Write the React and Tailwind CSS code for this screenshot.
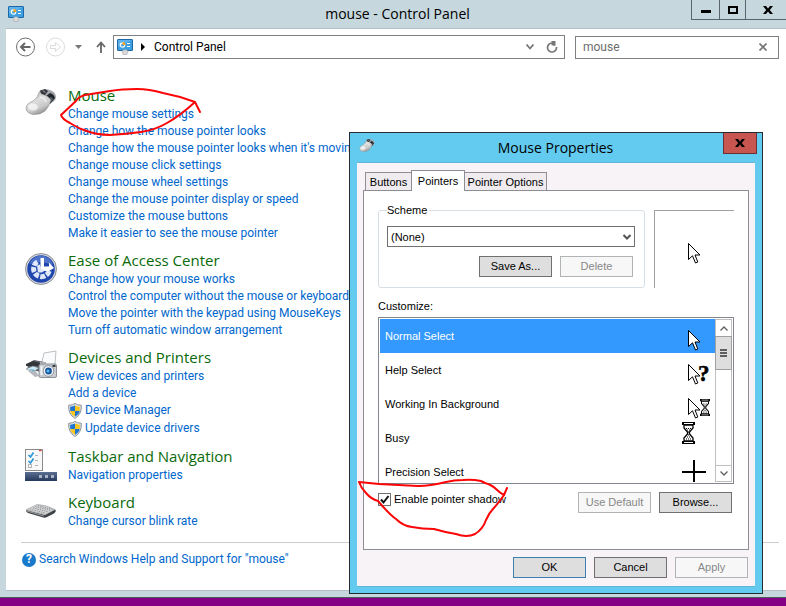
import React, { useState } from "react"

const groups = [
  {
    title: "Mouse",
    icon: "mouse",
    links: [
      { text: "Change mouse settings" },
      { text: "Change how the mouse pointer looks" },
      { text: "Change how the mouse pointer looks when it's moving" },
      { text: "Change mouse click settings" },
      { text: "Change mouse wheel settings" },
      { text: "Change the mouse pointer display or speed" },
      { text: "Customize the mouse buttons" },
      { text: "Make it easier to see the mouse pointer" },
    ],
  },
  {
    title: "Ease of Access Center",
    icon: "ease",
    links: [
      { text: "Change how your mouse works" },
      { text: "Control the computer without the mouse or keyboard" },
      { text: "Move the pointer with the keypad using MouseKeys" },
      { text: "Turn off automatic window arrangement" },
    ],
  },
  {
    title: "Devices and Printers",
    icon: "devices",
    links: [
      { text: "View devices and printers" },
      { text: "Add a device" },
      { text: "Device Manager", shield: true },
      { text: "Update device drivers", shield: true },
    ],
  },
  {
    title: "Taskbar and Navigation",
    icon: "taskbar",
    links: [{ text: "Navigation properties" }],
  },
  {
    title: "Keyboard",
    icon: "keyboard",
    links: [{ text: "Change cursor blink rate" }],
  },
]

const pointers = ["Normal Select", "Help Select", "Working In Background", "Busy", "Precision Select"]

/* ICONS */

const MouseIcon = ({ className }) => (
  <svg viewBox="0 0 32 30" className={className} aria-hidden="true">
    <defs>
      <linearGradient id="mouseBody" x1="0.2" y1="0" x2="0.7" y2="1">
        <stop offset="0" stopColor="#a8a8a8" />
        <stop offset="0.4" stopColor="#dedede" />
        <stop offset="0.7" stopColor="#cacaca" />
        <stop offset="1" stopColor="#848484" />
      </linearGradient>
    </defs>
    <path d="M15 4 Q19 0 25 2 Q31 4 31 9 Q31 12 28 14 L22 17z" fill="#a4a7ab" />
    <path d="M21 8 L25 5 Q29 6 30 10 L25 16 Q25 11 21 8z" fill="#23272e" />
    <path d="M25 9 Q27 9 28 11 L26 14z" fill="#59616c" />
    <path d="M14 4.500 Q15 2 17 3 L17 6 Q24 8 26 12 Q24 19 20 23 Q15 27 8 26.500 Q1 25 1 20 Q2 15 8 13 Q13 10 14 4.500z" fill="url(#mouseBody)" stroke="#8a8a8a" strokeWidth="0.600" />
    <path d="M15 2.500 L20 1 L23 3 L20 7 L16 5.500z" fill="#33363c" />
    <path d="M18 2.500 L20 4.500" stroke="#d5d5d5" />
    <ellipse cx="8" cy="19" rx="5" ry="3.500" fill="#fff" opacity="0.650" />
    <path d="M15 9 Q20 10 21 14" stroke="#f5f5f5" strokeWidth="1.500" fill="none" opacity="0.800" />
  </svg>
)

const EaseIcon = () => (
  <svg viewBox="0 0 32 32" className="h-8 w-8" aria-hidden="true">
    <circle cx="16" cy="16" r="15.500" fill="#d5d8dc" stroke="#777b82" strokeWidth="0.800" />
    <circle cx="16" cy="16" r="13.800" fill="#1f46ad" />
    <path d="M4 11 Q8 3 16 2.500 Q25 3 28 12 Q16 7 4 11z" fill="#6285d6" opacity="0.700" />
    <path
      d="M24.200 18 A8 8 0 1 1 13 8.500"
      fill="none"
      stroke="#dfe8fa"
      strokeWidth="5"
      strokeDasharray="5 1.400"
    />
    <path d="M15.500 5 h3.500 v8.500 h5 v-4 l5 5.500 l-5 3 h-8.500z" fill="#fff" />
    <path d="M12 12.500 l3 -1 l1 4 l4 2 l-3 2 h-4z" fill="#dfe8fa" />
  </svg>
)

const DevicesIcon = () => (
  <svg viewBox="0 0 32 32" className="h-8 w-8" aria-hidden="true">
    <path d="M19 3 L31 1 L30 14 L16 16z" fill="#fafbfc" stroke="#a0a5ab" strokeWidth="0.7" />
    <path d="M2 14 L9 10 L19 12 L16 22 L3 19z" fill="#5c6168" />
    <path d="M1 14 L8 11 L18 14 L14 16 L1 16z" fill="#33373c" />
    <path d="M1 19 L8 16 L14 18 L8 22z" fill="#cfeaf7" stroke="#6a7076" strokeWidth="0.5" />
    <path d="M3 21 L10 20 L14 26 L10 27z" fill="#b5b9be" />
    <path d="M4 19 l6 1 l-2 1z" fill="#3a9fd0" />
    <rect x="14" y="14" width="17.500" height="13.500" rx="1.500" fill="#c9cdd2" stroke="#777c83" strokeWidth="0.8" />
    <rect x="15" y="12" width="6" height="3" fill="#a7abb0" />
    <rect x="15.500" y="16" width="2" height="9" fill="#f2f3f5" />
    <rect x="27.500" y="15" width="3" height="2" fill="#3b4046" />
    <circle cx="23.500" cy="21" r="5.300" fill="#f3f5f7" stroke="#70757c" strokeWidth="0.7" />
    <circle cx="23.500" cy="21" r="3.400" fill="#14539c" />
    <circle cx="23" cy="21" r="1.500" fill="#58c0f0" />
  </svg>
)

const TaskbarIcon = () => (
  <svg viewBox="0 0 32 32" className="h-8 w-8" aria-hidden="true">
    <defs>
      <linearGradient id="bar" x1="0" y1="0" x2="0" y2="1">
        <stop offset="0" stopColor="#5b6f92" />
        <stop offset="1" stopColor="#26395c" />
      </linearGradient>
    </defs>
    <rect x="0.500" y="0.500" width="17" height="21" fill="#f8f8f8" stroke="#8b8b8b" />
    <rect x="14" y="1" width="2.500" height="1.200" fill="#d83b2b" />
    <path d="M3.500 6 l2 2 l3 -4.500 M3.500 12 l2 2 l3 -4.500" stroke="#2b95d8" strokeWidth="1.700" fill="none" />
    <rect x="3.500" y="15.500" width="3" height="3" fill="none" stroke="#b4b4b4" />
    <path d="M10 6.500 h3 M10 11.500 h3 M10 16.500 h3" stroke="#b4b4b4" />
    <rect x="0" y="23" width="32" height="9" fill="url(#bar)" />
    <path d="M14 26 h3 v3 h-3z M20 26 h3 v3 h-3z M26 26 h3 v3 h-3z" fill="#a9b4c6" />
  </svg>
)

const KeyboardIcon = () => (
  <svg viewBox="0 0 32 32" className="h-8 w-8" aria-hidden="true">
    <path d="M1 15 L20 20 L30 14.500 Q32 16 29 18.500 L21 22.500 Q18 23 15 21.500 L3 18 Q1 17 1 15z" fill="#3f4246" />
    <path d="M1.500 14.500 L12 9.500 Q20 9.500 30 14.500 L20 19.500 Q10 17.500 1.500 14.500z" fill="#d4d5d7" stroke="#8a8a8a" strokeWidth="0.500" />
    <path d="M5 14 L20 18 M8 12.800 L23 16.800 M10.500 11.600 L26 15.500 M13 10.600 L28 14.500" stroke="#85888c" strokeWidth="0.900" strokeDasharray="1.300 1" />
    <path d="M2 16 L19 21" stroke="#a5a7aa" strokeWidth="0.900" />
  </svg>
)

const icons = {
  mouse: <MouseIcon className="h-[30px] w-8" />,
  ease: <EaseIcon />,
  devices: <DevicesIcon />,
  taskbar: <TaskbarIcon />,
  keyboard: <KeyboardIcon />,
}

const ShieldIcon = () => (
  <svg viewBox="0 0 14 16" className="h-4 w-[14px] shrink-0" aria-hidden="true">
    <path d="M7 0.500 Q9 2 13.300 2.300 Q14 11 7 15.500 Q0 11 0.700 2.300 Q5 2 7 0.500z" fill="#e1e4e6" stroke="#7e868c" strokeWidth="0.900" />
    <path d="M7 2.500 V8 H2.300 Q2 6 2.200 3.700 Q5 3.500 7 2.500z M7 8 H11.700 Q11 11.500 7 13.800z" fill="#1f76d0" />
    <path d="M7 2.500 V8 H11.700 Q12 6 11.800 3.700 Q9 3.500 7 2.500z M7 8 H2.300 Q3 11.500 7 13.800z" fill="#fac61e" />
  </svg>
)

const PanelIcon = () => (
  <svg viewBox="0 0 16 16" className="h-4 w-4 shrink-0" aria-hidden="true">
    <rect x="0.500" y="0.500" width="15" height="11" rx="0.500" fill="#3d9fe0" stroke="#1c68a8" />
    <path d="M1 1 h14 l-14 7z" fill="#7fc6f2" opacity="0.500" />
    <circle cx="5.500" cy="6" r="2.200" fill="none" stroke="#fff" strokeWidth="1.200" />
    <path d="M5.500 6 V3 A3 3 0 0 1 8.500 6z" fill="#f6a51c" />
    <path d="M10 4.500 h3 M10 7.500 h3" stroke="#fff" />
    <path d="M5 12 Q8 9.500 11 12 L10 15.500 H6z" fill="#d9d9d9" stroke="#a3a3a3" strokeWidth="0.500" />
  </svg>
)

const arrow = "M0.500 0.500 V16.500 L4.500 12.800 L7.500 20 L9.800 19 L7 12 H12z"

const Hourglass = ({ x, y, w, h }) => (
  <svg x={x} y={y} width={w} height={h} viewBox="0 0 13 22" preserveAspectRatio="none">
    <path d="M0 0 h13 v3 h-13z M0 19 h13 v3 h-13z" fill="#000" />
    <path d="M2 1.500 h9 M2 20.500 h9" stroke="#fff" />
    <path d="M2 3 V6 L5.500 10 V12 L2 16 V19 H11 V16 L7.500 12 V10 L11 6 V3z" fill="#fff" stroke="#000" strokeWidth="1.300" />
    <path d="M4 6.500 h1 M6 6.500 h1 M8 6.500 h1 M5 8 h1 M7 8 h1 M6 10 h1 M6 13 h1 M5 15 h1 M7 15 h1 M4 17 h1 M6 17 h1 M8 17 h1" stroke="#000" />
  </svg>
)

const PointerPreview = ({ index }) => (
  <svg viewBox="0 0 32 34" className="h-[34px] w-8 shrink-0" aria-hidden="true">
    {index < 3 && (
      <path d={arrow} transform="translate(6 11)" fill="#fff" stroke="#000" />
    )}
    {index === 1 && (
      <text x="16" y="28" fontFamily="Liberation Serif, serif" fontWeight="bold" fontSize="23" fill="#000" stroke="#000" strokeWidth="0.500">?</text>
    )}
    {index === 2 && <Hourglass x={18} y={12} w={10} h={17} />}
    {index === 3 && <Hourglass x={0} y={1} w={13} h={22} />}
    {index === 4 && <path d="M0 17 h24 M12 5 v24" stroke="#000" strokeWidth="2" />}
  </svg>
)

const CloseCross = () => (
  <svg viewBox="0 0 10 8" className="h-2 w-[10px]" aria-hidden="true">
    <path d="M0 0 H3 L5 2.500 L7 0 H10 L6.800 4 L10 8 H7 L5 5.500 L3 8 H0 L3.200 4z" fill="#000" />
  </svg>
)

/* DIALOG */

const DialogButton = ({ children, disabled, primary }) => (
  <button
    disabled={disabled}
    className={`h-[21px] w-[73px] border text-center leading-[19px]
      ${
        disabled
          ? "border-[#b0b4b5] bg-[#f7f7f7] text-[#888888]"
          : primary
          ? "border-[#3c7fb1] bg-[#dedede]"
          : "border-[#707070] bg-[#dedede]"
      }`}
  >
    {children}
  </button>
)

const MouseProperties = () => {
  const [selected, setSelected] = useState(0)
  const [shadow, setShadow] = useState(true)

  return (
    <section
      aria-label="Mouse Properties"
      className="absolute left-[349px] top-[132px] w-[414px] border border-[#242c30] bg-[#62cbef] pb-[6px]
                 font-['Liberation_Sans',Arial,sans-serif] text-[11px] leading-[14px] text-black"
    >
      {/* TITLE BAR */}
      <header className="flex h-[29px] items-start pl-[9px] pr-[5px]">
        <MouseIcon className="mt-[5px] h-4 w-4" />
        <h2 className="flex-1 pl-[13px] text-center font-['Open_Sans',sans-serif] text-[14px] leading-[30px]">
          Mouse Properties
        </h2>
        <button
          aria-label="Close"
          className="flex h-[21px] w-[34px] items-center justify-center border border-t-0 border-[#6c3033] bg-[#c75650]"
        >
          <CloseCross />
        </button>
      </header>

      <div className="mx-[7px] border-y border-[#62b4d8] bg-[#f7f3f7] px-[6px] pb-2 pt-[7px]">
        {/* TABS */}
        <div role="tablist" className="flex items-end pl-[2px]">
          <button role="tab" className="h-[18px] w-[46px] border border-b-0 border-r-0 border-[#8c8e94] bg-[#efebef]">
            Buttons
          </button>
          <button
            role="tab"
            aria-selected="true"
            className="relative -mb-px h-[21px] w-[54px] border border-b-0 border-[#8c8e94] bg-white"
          >
            Pointers
          </button>
          <button role="tab" className="h-[18px] w-[82px] border border-b-0 border-l-0 border-[#8c8e94] bg-[#efebef]">
            Pointer Options
          </button>
        </div>

        <div className="border border-[#8c8e94] bg-white px-[14px] pb-[36px] pt-[12px]">
          {/* SCHEME */}
          <div className="flex items-end gap-[9px]">
            <fieldset className="w-[267px] rounded-[3px] border border-[#d5dfe5] px-2 pb-[10px]">
              <legend className="px-0">
                <label htmlFor="scheme" className="pr-[2px]">Scheme</label>
              </legend>
              <div className="relative mr-px mt-[9px]">
                <select
                  id="scheme"
                  className="block h-[21px] w-full appearance-none border border-[#707070] bg-white pl-[3px]"
                >
                  <option>(None)</option>
                </select>
                <svg viewBox="0 0 8 6" className="pointer-events-none absolute right-[4px] top-[8px] h-[6px] w-2" aria-hidden="true">
                  <path d="M0.500 1 L4 4.500 L7.500 1" fill="none" stroke="#555" strokeWidth="2" />
                </svg>
              </div>
              <div className="mt-[9px] flex justify-end gap-2 pr-[3px]">
                <DialogButton>Save As...</DialogButton>
                <DialogButton disabled>Delete</DialogButton>
              </div>
            </fieldset>
            <div className="flex h-[78px] flex-1 items-center justify-center border-l border-t border-[#a0a0a0] pt-2">
              <svg viewBox="0 0 13 21" className="h-[21px] w-[13px]" aria-hidden="true">
                <path d={arrow} fill="#fff" stroke="#000" />
              </svg>
            </div>
          </div>

          {/* CUSTOMIZE LIST */}
          <p id="customize" className="mb-[4px] mt-[11px]">Customize:</p>
          <div className="flex h-[167px] border border-[#828790] p-px">
            <ul role="listbox" aria-labelledby="customize" className="flex-1 overflow-hidden">
              {pointers.map((name, i) => (
                <li
                  key={name}
                  role="option"
                  aria-selected={selected === i}
                  onClick={() => setSelected(i)}
                  className={`flex h-[34px] items-center justify-between pl-[5px] pr-px
                    ${selected === i ? "bg-[#3399ff] text-white" : "text-black"}`}
                >
                  {name}
                  <PointerPreview index={i} />
                </li>
              ))}
            </ul>
            <div className="flex w-[17px] flex-col border border-[#bfbfbf]">
              <button aria-label="Scroll up" className="flex h-4 items-center justify-center">
                <svg viewBox="0 0 8 5" className="h-[5px] w-2" aria-hidden="true">
                  <path d="M0.500 4.500 L4 1 L7.500 4.500" fill="none" stroke="#606060" strokeWidth="1.300" />
                </svg>
              </button>
              <div className="-mx-px flex h-[34px] flex-col items-center justify-center gap-px border border-[#a0a0a0] bg-[#dedede]">
                <span className="h-[2px] w-[7px] bg-[#606060]" />
                <span className="h-[2px] w-[7px] bg-[#606060]" />
                <span className="h-[2px] w-[7px] bg-[#606060]" />
              </div>
              <div className="flex-1" />
              <button aria-label="Scroll down" className="flex h-4 items-center justify-center border-t border-[#bfbfbf]">
                <svg viewBox="0 0 8 5" className="h-[5px] w-2" aria-hidden="true">
                  <path d="M0.500 0.500 L4 4 L7.500 0.500" fill="none" stroke="#606060" strokeWidth="1.300" />
                </svg>
              </button>
            </div>
          </div>

          <div className="mt-[8px] flex items-start gap-2 pr-[2px]">
            <label className="mr-auto flex items-center gap-[3px]">
              <span className="grid h-[13px] w-[13px]">
                <input
                  type="checkbox"
                  checked={shadow}
                  onChange={(e) => setShadow(e.target.checked)}
                  className="col-start-1 row-start-1 h-[13px] w-[13px] appearance-none border border-[#707070] bg-white"
                />
                {shadow && (
                  <svg viewBox="0 0 13 13" className="pointer-events-none col-start-1 row-start-1 h-[13px] w-[13px]" aria-hidden="true">
                    <path d="M3 6.500 L5.500 9.500 L10.500 3" fill="none" stroke="#111" strokeWidth="2" />
                  </svg>
                )}
              </span>
              Enable pointer shadow
            </label>
            <DialogButton disabled>Use Default</DialogButton>
            <DialogButton>Browse...</DialogButton>
          </div>
        </div>

        {/* FOOTER */}
        <div className="mt-[7px] flex justify-end gap-2 pr-px">
          <DialogButton primary>OK</DialogButton>
          <DialogButton>Cancel</DialogButton>
          <DialogButton disabled>Apply</DialogButton>
        </div>
      </div>
    </section>
  )
}

/* red pen marks */
const PenMarks = () => (
  <svg viewBox="0 0 786 606" className="pointer-events-none absolute left-0 top-0 h-[606px] w-[786px]" aria-hidden="true">
    <g fill="none" stroke="#fb0507" strokeWidth="2" strokeLinecap="round" strokeLinejoin="round">
      <path d="M200 112 L195 102 Q179 96 163 93 Q149 89 137 89 Q122 89 110 91 L85 95 Q78 97 76 101 L61 115 Q62 119 70 123 Q78 128 84 130 Q96 135 110 135 Q127 134 141 132 Q155 130 167 123 Q181 115 195 102" />
      <path d="M507 488 L504 495 Q500 493 496 489 Q492 485 485 483 L481 481 Q472 479 463 480 Q454 480 446 482 Q430 486 418 486 Q398 485 379 484 L359 482 Q361 488 366 493 Q371 499 378 501 Q390 515 396 519 Q403 526 412 527 Q422 529 434 529 Q444 532 456 534 Q467 538 475 534 Q483 529 486 520 Q489 513 493 509 Q500 501 504 495" />
    </g>
  </svg>
)

/* CONTROL PANEL */

const App = () => {
  const [query, setQuery] = useState("mouse")

  return (
    <div className="relative flex min-h-screen flex-col overflow-hidden bg-[#c6d7de] font-['Roboto','Segoe_UI',sans-serif] text-[12px] leading-[17px]">
      {/* TITLE BAR */}
      <header className="flex h-[28px] items-start">
        <div className="w-[86px] pl-2 pt-[6px]">
          <PanelIcon />
        </div>
        <h1 className="flex-1 pl-[18px] text-center font-['Open_Sans',sans-serif] text-[14px] leading-[28px] text-black">
          mouse - Control Panel
        </h1>
        <div className="flex h-5 w-[95px] border-b border-l border-[#5a646b]">
          <button aria-label="Minimize" className="flex w-[28px] items-center justify-center border-r border-[#5a646b]">
            <span className="mt-1 h-[3px] w-[10px] bg-black" />
          </button>
          <button aria-label="Maximize" className="flex w-[26px] items-center justify-center border-r border-[#5a646b]">
            <span className="h-2 w-[10px] border-2 border-black" />
          </button>
          <button aria-label="Close" className="flex flex-1 items-center justify-center pl-1">
            <CloseCross />
          </button>
        </div>
      </header>

      <main className="ml-[6px] flex-1 border-y border-[#b4bec8] bg-white">
        {/* NAVIGATION */}
        <nav className="flex items-center pl-[10px] pr-[7px] pt-[6px]">
          <button aria-label="Back">
            <svg viewBox="0 0 20 20" className="h-5 w-5" aria-hidden="true">
              <circle cx="9.500" cy="10" r="9" fill="none" stroke="#6e6e6e" />
              <path d="M14.500 10 H6 M9 6 L5 10 L9 14" fill="none" stroke="#666" strokeWidth="2" />
            </svg>
          </button>
          <button aria-label="Forward" className="ml-[10px]">
            <svg viewBox="0 0 20 20" className="h-5 w-5" aria-hidden="true">
              <circle cx="9.500" cy="10" r="9" fill="none" stroke="#dcdcdc" />
              <path d="M4.500 8.500 H9.500 V5.500 L14.500 10 L9.500 14.500 V11.500 H4.500z" fill="none" stroke="#dcdcdc" />
            </svg>
          </button>
          <button aria-label="Recent locations" className="ml-[9px]">
            <svg viewBox="0 0 8 4" className="h-1 w-2" aria-hidden="true">
              <path d="M0 0 H7 L3.500 4z" fill="#777" />
            </svg>
          </button>
          <button aria-label="Up" className="ml-[13px] mr-[7px]">
            <svg viewBox="0 0 10 12" className="h-3 w-[10px]" aria-hidden="true">
              <path d="M5 12 V2 M1 6 L5 1.500 L9 6" fill="none" stroke="#666" strokeWidth="1.800" />
            </svg>
          </button>
          <div className="flex h-6 flex-1 items-center border border-[#808080] pl-[3px] pr-[6px]">
            <PanelIcon />
            <svg viewBox="0 0 4 8" className="ml-2 mr-[9px] h-2 w-1" aria-hidden="true">
              <path d="M0 0 L4 4 L0 8z" fill="#000" />
            </svg>
            <span className="flex-1 text-black">Control Panel</span>
            <button aria-label="Previous locations">
              <svg viewBox="0 0 8 6" className="h-[6px] w-2" aria-hidden="true">
                <path d="M0.500 0.500 L4 4.500 L7.500 0.500" fill="none" stroke="#777" strokeWidth="1.800" />
              </svg>
            </button>
            <button aria-label="Refresh" className="ml-[12px]">
              <svg viewBox="0 0 12 12" className="h-3 w-3" aria-hidden="true">
                <path d="M10.500 6 A4.500 4.500 0 1 1 6 2" fill="none" stroke="#777" strokeWidth="1.700" />
                <path d="M5.500 0 L9.500 0 L9.500 5 L5.500 4.200z" fill="#777" />
              </svg>
            </button>
          </div>
          <div className="ml-[10px] flex h-[23px] w-[204px] items-center border border-[#808080] pl-[7px] pr-[11px]">
            <input
              aria-label="Search Control Panel"
              value={query}
              onChange={(e) => setQuery(e.target.value)}
              className="min-w-0 flex-1 bg-transparent text-[#6d6d6d] outline-none"
            />
            <button aria-label="Clear search" onClick={() => setQuery("")}>
              <svg viewBox="0 0 8 8" className="h-2 w-2" aria-hidden="true">
                <path d="M0.500 0.500 L7.500 7.500 M7.500 0.500 L0.500 7.500" stroke="#777" strokeWidth="1.700" />
              </svg>
            </button>
          </div>
        </nav>

        {/* RESULTS */}
        <div className="flex flex-col gap-2 pl-[19px] pt-[26px]">
          {groups.map((group) => (
            <section key={group.title} className="flex gap-[11px]">
              <div className="-mb-2 h-8 w-8 shrink-0 pt-[3px]">{icons[group.icon]}</div>
              <div>
                <h2 className="pb-px font-['Open_Sans',sans-serif] text-[15px] leading-[20px] text-[#0a6a0a]">{group.title}</h2>
                <ul>
                  {group.links.map((link) => (
                    <li key={link.text} className={link.shield ? "h-[18px]" : "h-[17px]"}>
                      <a href="#" className="flex items-center gap-[3px] whitespace-nowrap text-[#0066cc]">
                        {link.shield && <ShieldIcon />}
                        {link.text}
                      </a>
                    </li>
                  ))}
                </ul>
              </div>
            </section>
          ))}
        </div>

        <footer className="ml-[15px] mr-[7px] mt-[12px] border-t border-[#cccccc] pt-[8px]">
          <a href="#" className="flex items-center gap-[3px] pl-px text-[#0066cc]">
            <span className="flex h-[14px] w-[14px] items-center justify-center rounded-full bg-[#1979ca] font-bold text-white">
              ?
            </span>
            Search Windows Help and Support for "mouse"
          </a>
        </footer>
      </main>

      {/* DESKTOP EDGE */}
      <div className="mt-[6px] h-[9px] border-t border-[#4c5a60] bg-[#840084]" />

      <MouseProperties />
      <PenMarks />
    </div>
  )
}

export default App
